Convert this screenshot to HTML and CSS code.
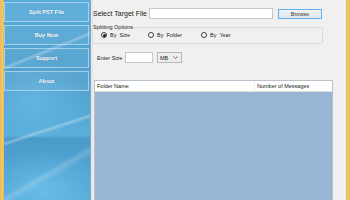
FILE: index.html
```html
<!DOCTYPE html>
<html lang="en">
<head>
<meta charset="utf-8">
<title>Split PST</title>
<link rel="stylesheet" href="styles.css">
</head>
<body>
<div class="window">
  <div class="edge edge-left"></div>
  <nav class="sidebar">
    <div class="nav-btn">Split PST File</div>
    <div class="nav-btn">Buy Now</div>
    <div class="nav-btn">Support</div>
    <div class="nav-btn">About</div>
  </nav>
  <div class="divider"></div>
  <main class="content">
    <div class="target-row">
      <span class="target-label">Select Target File</span>
      <span class="textbox target-input"></span>
      <span class="browse">Browse</span>
    </div>
    <fieldset class="group">
      <legend class="group-title">Splitting Options</legend>
      <div class="radios">
        <span class="radio-item"><span class="radio checked"></span><span>By&nbsp; Size</span></span>
        <span class="radio-item"><span class="radio"></span><span>By&nbsp; Folder</span></span>
        <span class="radio-item"><span class="radio"></span><span>By&nbsp; Year</span></span>
      </div>
    </fieldset>
    <div class="size-row">
      <span class="size-label">Enter Size</span>
      <span class="textbox size-input"></span>
      <span class="combo"><span>MB</span><svg class="chev" width="5" height="3" viewBox="0 0 5 3"><path d="M0.5 0.5 L2.5 2.5 L4.5 0.5" fill="none" stroke="#444" stroke-width="0.8"/></svg></span>
    </div>
    <div class="list">
      <div class="list-head">
        <span class="col">Folder Name</span>
        <span class="col col-num">Number of Messages</span>
      </div>
      <div class="list-body"></div>
    </div>
  </main>
  <div class="edge edge-right"></div>
</div>
</body>
</html>
```

FILE: styles.css
```css
html, body {
  margin: 0;
  padding: 0;
  width: 350px;
  height: 200px;
  overflow: hidden;
  background: #f0f0f0;
  font-family: "Liberation Sans", Arial, sans-serif;
  color: #222;
}

.window {
  display: flex;
  width: 350px;
  height: 200px;
}

.edge {
  width: 4px;
  flex: none;
  background: linear-gradient(90deg, #e9b955, #f3c86c 50%, #e9b955);
}

.sidebar {
  width: 86px;
  flex: none;
  display: flex;
  flex-direction: column;
  gap: 3px;
  padding-top: 2px;
  box-sizing: border-box;
  background:
    linear-gradient(158deg, transparent 0 28%, rgba(255,255,255,0.28) 29%, transparent 30.5%),
    linear-gradient(162deg, transparent 0 62%, rgba(255,255,255,0.3) 63%, transparent 64.5%),
    linear-gradient(150deg, transparent 0 78%, rgba(255,255,255,0.18) 80%, transparent 83%),
    radial-gradient(ellipse 60px 40px at 30px 100px, rgba(120,200,240,0.45), transparent),
    radial-gradient(ellipse 60px 40px at 40px 190px, rgba(120,205,245,0.55), transparent),
    linear-gradient(180deg, #58acd9 0%, #4e9ecd 40%, #5aaed9 68%, #4b9bca 69%, #56aad7 100%);
}

.nav-btn {
  height: 20px;
  margin-right: 1px;
  box-sizing: border-box;
  border: 1px solid rgba(220,240,252,0.55);
  background: rgba(255,255,255,0.06);
  display: flex;
  align-items: center;
  justify-content: center;
  color: #fff;
  font-weight: bold;
  font-size: 5.5px;
  text-shadow: 0 0 1px rgba(40,90,130,0.6);
}

.divider {
  width: 2px;
  flex: none;
  background: #e3e6ea;
  border-left: 1px solid #8aa6bc;
}

.content {
  flex: 1;
  display: flex;
  flex-direction: column;
  padding: 8px 13px 0 0;
  min-width: 0;
}

.target-row {
  display: flex;
  align-items: center;
  height: 11px;
}

.target-label {
  width: 56px;
  font-size: 7px;
  color: #1a1a1a;
}

.textbox {
  box-sizing: border-box;
  background: #fff;
  border: 1px solid #c6c8cc;
}

.target-input {
  width: 124px;
  height: 11px;
}

.browse {
  margin-left: 5px;
  width: 44px;
  height: 10px;
  box-sizing: border-box;
  border: 1px solid #64aee9;
  background: linear-gradient(#eef3f8, #e1e6eb);
  font-size: 5.5px;
  color: #333;
  display: flex;
  align-items: center;
  justify-content: center;
}

.group {
  margin: 5px 0 0 -1px;
  width: 231px;
  box-sizing: border-box;
  padding: 1px 0 4px 0;
  border: 1px solid #dadada;
  border-radius: 2px;
  min-width: 0;
}

.group-title {
  font-size: 5.5px;
  line-height: 6px;
  padding: 0;
  margin-left: 0;
  color: #222;
}

.radios {
  display: grid;
  grid-template-columns: 47px 53px auto;
  margin-left: 8px;
  height: 8px;
  align-items: center;
}

.radio-item {
  display: flex;
  align-items: center;
  gap: 3px;
  font-size: 5.5px;
  color: #222;
}

.radio {
  width: 6px;
  height: 6px;
  box-sizing: border-box;
  border: 1px solid #3a3a3a;
  border-radius: 50%;
  background: #fff;
  display: flex;
  align-items: center;
  justify-content: center;
}

.radio.checked::after {
  content: "";
  width: 3px;
  height: 3px;
  border-radius: 50%;
  background: #1e1e1e;
}

.size-row {
  display: flex;
  align-items: center;
  margin-top: 8px;
  height: 11px;
  padding-left: 4px;
}

.size-label {
  width: 28px;
  font-size: 5.5px;
  color: #222;
}

.size-input {
  width: 28px;
  height: 11px;
}

.combo {
  margin-left: 4px;
  width: 25px;
  height: 11px;
  box-sizing: border-box;
  border: 1px solid #b8b8b8;
  background: #ececec;
  display: flex;
  align-items: center;
  justify-content: space-between;
  padding: 0 3px 0 2px;
  font-size: 5.5px;
  color: #222;
}

.chev {
  display: block;
}

.list {
  margin: 17px 0 0 1px;
  width: 239px;
  flex: 1;
  display: flex;
  flex-direction: column;
  box-sizing: border-box;
  border: 1px solid #b9c2cc;
  border-bottom: none;
}

.list-head {
  height: 10px;
  flex: none;
  display: grid;
  grid-template-columns: 1fr 78px;
  background: #fff;
  border-bottom: 1px solid #e2e2e2;
}

.col {
  font-size: 5.5px;
  line-height: 10px;
  padding-left: 2px;
  color: #222;
}

.col-num {
  border-left: 1px solid #eeeeee;
}

.list-body {
  flex: 1;
  background: #99b5d4;
}
```
